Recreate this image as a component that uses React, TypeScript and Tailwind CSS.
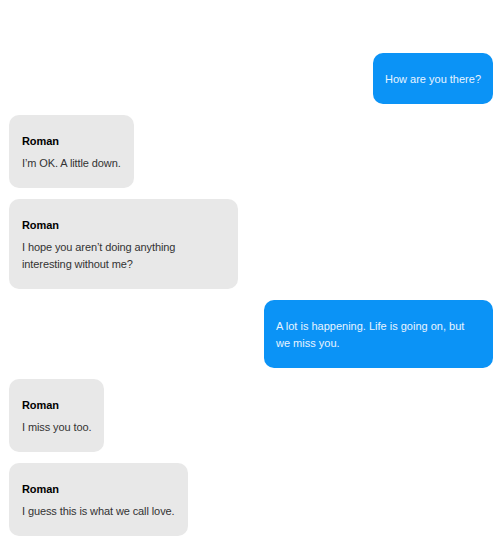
const messages = [
  { me: true, text: 'How are you there?' },
  { me: false, name: 'Roman', text: 'I’m OK. A little down.' },
  { me: false, name: 'Roman', text: 'I hope you aren’t doing anything interesting without me?' },
  { me: true, text: 'A lot is happening. Life is going on, but we miss you.' },
  { me: false, name: 'Roman', text: 'I miss you too.' },
  { me: false, name: 'Roman', text: 'I guess this is what we call love.' },
];

export default function App() {
  return (
    <div
      className="w-[502px] h-[560px] bg-white flex flex-col gap-[11px] px-[9px] pt-[53px]"
      style={{ fontFamily: '"Liberation Sans", Arial, sans-serif' }}
    >
      {messages.map((m, i) =>
        m.me ? (
          <div
            key={i}
            className="self-end max-w-[229px] rounded-[10px] bg-[#0b93f6] px-[12px] pt-[18px] pb-[16px] text-[11px] leading-[17px] text-[#e8f4ff]"
          >
            {m.text}
          </div>
        ) : (
          <div
            key={i}
            className="self-start max-w-[229px] rounded-[10px] bg-[#e8e8e8] px-[13px] pt-[18px] pb-[16px] text-[11px] leading-[17px] tracking-[-0.1px]"
          >
            <p className="font-bold text-black">{m.name}</p>
            <p className="mt-[5px] text-[#333333]">{m.text}</p>
          </div>
        )
      )}
    </div>
  );
}
